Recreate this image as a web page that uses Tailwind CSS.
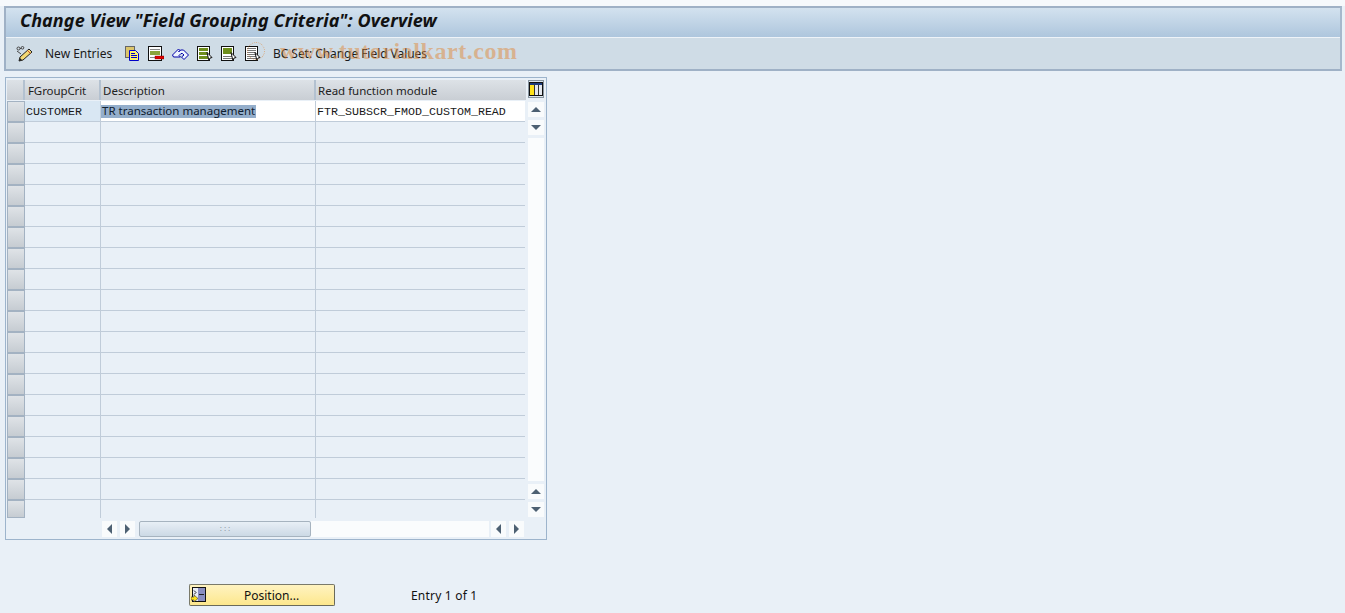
<!DOCTYPE html>
<html lang="en">
<head>
    <meta charset="UTF-8">
    <title>Change View "Field Grouping Criteria": Overview</title>
    <script src="https://cdn.jsdelivr.net/npm/@tailwindcss/browser@4"></script>
</head>
<body class="bg-[#e9f0f7] h-[613px] w-[1345px] overflow-hidden font-['Noto_Sans','Liberation_Sans',sans-serif] text-[12px] text-[#1a1a1a]">
    <div class="h-[6px] bg-[#f6f9fc]"></div>

    <!-- title + toolbar -->
    <div class="ml-[4px] w-[1338px] h-[65px] border-2 border-[#9fb1c6] border-r-[#a6b8cc] flex flex-col">
        <div class="h-[29px] bg-gradient-to-b from-[#d3e2ef] to-[#aec6dd] pl-[14px] flex items-center pb-[5px]">
            <h1 class="font-['Noto_Sans',sans-serif] font-bold italic text-[18px] tracking-[0.1px] text-[#111] whitespace-nowrap">Change View "Field Grouping Criteria": Overview</h1>
        </div>
        <div class="h-px bg-[#eef3f8]"></div>
        <div class="relative flex-1 bg-[#cfdce6] flex items-center pl-[10px]">
            <svg class="w-[17px] h-[16px]" viewBox="0 0 17 16">
                <circle cx="2.500" cy="2.500" r="1.500" fill="none" stroke="#444"/>
                <circle cx="6.500" cy="1.800" r="1.300" fill="none" stroke="#444"/>
                <path d="M1 5l4 3M4 2.500h1" stroke="#444" fill="none"/>
                <path d="M3 15l1-4 9-8 3 3-9 8z" fill="#f3d873" stroke="#222"/>
                <path d="M3 15l1-3 2 2z" fill="#222"/>
                <path d="M11.500 4.500l3 3" stroke="#c84a2a"/>
            </svg>
            <span class="ml-[12px] w-[67px] whitespace-nowrap">New Entries</span>
            <svg class="ml-[12px] w-[16px] h-[16px]" viewBox="0 0 16 16">
                <rect x="1.500" y="0.500" width="9" height="11" fill="#dcc56a" stroke="#666"/>
                <path d="M5.500 4.500h6l3 3v7h-9z" fill="#fff46a" stroke="#0000c8"/>
                <path d="M7 7.500h4M7 9.500h6M7 11.500h6" stroke="#0000c8"/>
            </svg>
            <svg class="ml-[8px] w-[16px] h-[16px]" viewBox="0 0 16 16">
                <rect x="0.500" y="0.500" width="13" height="14" fill="#fff" stroke="#111"/>
                <path d="M2 3.500h10" stroke="#888"/>
                <rect x="2" y="5" width="10" height="4" fill="#8aa53a"/>
                <path d="M2 11.500h5" stroke="#888"/>
                <rect x="7" y="10" width="9" height="3" fill="#e00000" stroke="#600" stroke-width="0.400"/>
            </svg>
            <svg class="ml-[8px] w-[17px] h-[16px]" viewBox="0 0 17 16">
                <path d="M0.500 9l6-6 1.500 1.500-1.500 1.500 2-2 3 0 5 5-4.500 4.500-2.500-2.500 2.500-2-1.500-1.500h-1.500l-2 2 1.500 1.500h-7z" fill="#eef4ff" stroke="#0000a8"/>
            </svg>
            <svg class="ml-[8px] w-[16px] h-[16px]" viewBox="0 0 16 16">
                <rect x="0.500" y="0.500" width="12" height="14" fill="#fff" stroke="#111"/>
                <rect x="2" y="2" width="9" height="3" fill="#6f8f1c"/>
                <rect x="2" y="6" width="9" height="3" fill="#6f8f1c"/>
                <rect x="2" y="10" width="9" height="3" fill="#6f8f1c"/>
                <path d="M10 6.500l5 5-2 .5-1 3z" fill="#fff" stroke="#111"/>
            </svg>
            <svg class="ml-[8px] w-[16px] h-[16px]" viewBox="0 0 16 16">
                <rect x="0.500" y="0.500" width="12" height="14" fill="#fff" stroke="#111"/>
                <rect x="2" y="2" width="9" height="6" fill="#6f8f1c"/>
                <path d="M2 10.500h9M2 12.500h9" stroke="#777"/>
                <path d="M10 6.500l5 5-2 .5-1 3z" fill="#fff" stroke="#111"/>
            </svg>
            <svg class="ml-[8px] w-[16px] h-[16px]" viewBox="0 0 16 16">
                <rect x="0.500" y="0.500" width="12" height="14" fill="#fff" stroke="#111"/>
                <path d="M2 2.500h9M2 4.500h9M2 6.500h9M2 8.500h9M2 10.500h9M2 12.500h9" stroke="#777"/>
                <path d="M10 6.500l5 5-2 .5-1 3z" fill="#fff" stroke="#111"/>
            </svg>
            <span class="ml-[12px] whitespace-nowrap tracking-[-0.05px]">BC Set: Change Field Values</span>
            <!-- watermark -->
            <div class="absolute left-[241px] top-0 flex items-center text-[#e0883a]/50 pointer-events-none">
                <span class="w-[18px] h-[18px] rounded-full border border-dotted border-[#e0883a]/60"></span>
                <span class="ml-[15px] font-['Liberation_Serif',serif] font-bold text-[24px] leading-[26px] tracking-[0.55px] whitespace-nowrap">www.tutorialkart.com</span>
            </div>
        </div>
    </div>

    <!-- table control -->
    <div class="mt-[6px] ml-[5px] w-[542px] h-[463px] border border-[#9db4cc] pl-px pt-[2px] flex">
        <div class="w-[519px] flex-none">
            <div class="flex h-[21px] bg-gradient-to-b from-[#dde2e7] to-[#c9ced4] border-b border-[#e9f0f7] text-[11.5px] text-[#222]">
                <div class="w-[18px] border-r-2 border-[#b3c1d0]"></div>
                <div class="w-[76px] border-r-2 border-[#b3c1d0] pl-[3px] leading-[21px] tracking-[-0.1px]">FGroupCrit</div>
                <div class="w-[215px] border-r-2 border-[#b3c1d0] pl-[2px] leading-[21px]">Description</div>
                <div class="flex-1 pl-[2px] leading-[21px]">Read function module</div>
            </div>
            <div id="rows" class="font-['Liberation_Mono',monospace] text-[11.67px]">
                <div class="flex h-[21px]">
                    <div class="w-[18px] h-[21px] bg-gradient-to-b from-[#dfe3e7] to-[#c6ccd2] border border-[#a3b2c2]"></div>
                    <div class="w-[76px] bg-[#d9e7f3] border-b border-r border-[#c0ccd9] leading-[22px] pl-px">CUSTOMER</div>
                    <div class="w-[215px] bg-white border-b border-r border-[#c0ccd9] font-['Noto_Sans','Liberation_Sans',sans-serif] text-[11.5px] pt-[4px]"><span class="block w-fit h-[13px] leading-[12px] pl-px pr-px bg-[#94aecb] text-[#10202f]">TR transaction management</span></div>
                    <div class="flex-1 mr-px bg-white border-b border-[#c0ccd9] leading-[22px] pl-px">FTR_SUBSCR_FMOD_CUSTOM_READ</div>
                </div>
            </div>
        </div>
        <!-- vertical scrollbar -->
        <div class="w-[20px] flex-none flex flex-col pl-[2px]">
            <button class="w-[16px] h-[18px] flex items-center justify-center border border-[#87949f] bg-[#dbe5ee]">
                <svg class="w-[14px] h-[14px]" viewBox="0 0 14 14">
                    <rect x="0.500" y="0.500" width="13" height="13" fill="#fff" stroke="#111"/>
                    <rect x="1" y="1" width="12" height="2" fill="#1c3a7a"/>
                    <rect x="1" y="3" width="4" height="10" fill="#ffe21a"/>
                    <rect x="6" y="3" width="3" height="10" fill="#e4e8ee"/>
                    <rect x="10" y="3" width="3" height="10" fill="#e4e8ee"/>
                    <path d="M5.500 3v10M9.500 3v10" stroke="#333"/>
                </svg>
            </button>
            <div class="mt-[4px] w-[16px] flex-1 flex flex-col gap-[3px]">
                <div class="h-[15px] bg-[#f9fbfc] flex items-center justify-center"><span class="border-x-[5px] border-x-transparent border-b-[5px] border-b-[#4d6072]"></span></div>
                <div class="h-[15px] bg-[#f9fbfc] flex items-center justify-center"><span class="border-x-[5px] border-x-transparent border-t-[5px] border-t-[#4d6072]"></span></div>
                <div class="flex-1 bg-[#fafcfd]"></div>
                <div class="h-[15px] bg-[#f9fbfc] flex items-center justify-center"><span class="border-x-[5px] border-x-transparent border-b-[5px] border-b-[#4d6072]"></span></div>
                <div class="h-[15px] bg-[#f9fbfc] flex items-center justify-center"><span class="border-x-[5px] border-x-transparent border-t-[5px] border-t-[#4d6072]"></span></div>
                <div class="h-[19px]"></div>
            </div>
        </div>
    </div>

    <!-- footer row -->
    <div class="mt-[44px] ml-[189px] flex items-center">
        <button class="w-[146px] h-[22px] rounded-[2px] border border-[#7a7a6a] border-r-[#6a6a5a] border-b-[#6a6a5a] bg-gradient-to-b from-[#fff3c0] to-[#fde78c] flex items-center">
            <svg class="w-[15px] h-[16px] ml-px" viewBox="0 0 15 16">
                <rect x="1.500" y="0.500" width="13" height="14" fill="#e8ecf6" stroke="#111"/>
                <rect x="7" y="1" width="7" height="13" fill="#8a8ec0"/>
                <path d="M8 7.500h5M3 3.500l2 2-2 2" stroke="#222" fill="none"/>
                <path d="M0 10h3V8l4 3.500-4 3.500v-2H0z" fill="#ffe21a" stroke="#333" stroke-width="0.600"/>
            </svg>
            <span class="ml-[38px] pt-px text-[#111]">Position...</span>
        </button>
        <span class="ml-[76px] pt-[2px] text-[#111] tracking-[0.2px]">Entry 1 of 1</span>
    </div>

    <script>
        // empty rows of the table control
        const rows = document.getElementById('rows');
        for (let i = 0; i < 19; i++) {
            if (i < 18) {
                rows.insertAdjacentHTML('beforeend', `
                <div class="flex h-[21px]">
                    <div class="w-[18px] h-[21px] bg-gradient-to-b from-[#dfe3e7] to-[#c6ccd2] border border-[#a3b2c2]"></div>
                    <div class="w-[76px] border-b border-r border-[#c0ccd9]"></div>
                    <div class="w-[215px] border-b border-r border-[#c0ccd9]"></div>
                    <div class="flex-1 mr-px border-b border-[#c0ccd9]"></div>
                </div>`);
            } else {
                // last row stops short of the scrollbar and has no bottom line
                rows.insertAdjacentHTML('beforeend', `
                <div class="flex h-[21px]">
                    <div class="w-[18px] h-[18px] bg-gradient-to-b from-[#dfe3e7] to-[#c6ccd2] border border-[#a3b2c2]"></div>
                    <div class="w-[76px] h-[18px] border-r border-[#c0ccd9]"></div>
                    <div class="w-[215px] h-[18px] border-r border-[#c0ccd9]"></div>
                </div>`);
            }
        }
        // horizontal scrollbar
        rows.insertAdjacentHTML('beforeend', `
            <div class="flex h-[16px] ml-[95px] gap-[3px]">
                <div class="w-[15px] bg-[#f9fbfc] flex items-center justify-center"><span class="border-y-[5px] border-y-transparent border-r-[5px] border-r-[#4d6072]"></span></div>
                <div class="w-[15px] bg-[#f9fbfc] flex items-center justify-center"><span class="border-y-[5px] border-y-transparent border-l-[5px] border-l-[#4d6072]"></span></div>
                <div class="w-[172px] flex-none ml-px bg-gradient-to-b from-[#e8eff6] to-[#ccd9e5] border border-[#a6b3bf] rounded-[2px] flex items-center justify-center text-[7px] leading-none text-[#8a98a5]">:::</div>
                <div class="w-[178px] flex-none -ml-[3px] bg-[#fafcfd]"></div>
                <div class="w-[15px] -ml-px bg-[#f9fbfc] flex items-center justify-center"><span class="border-y-[5px] border-y-transparent border-r-[5px] border-r-[#4d6072]"></span></div>
                <div class="w-[15px] bg-[#f9fbfc] flex items-center justify-center"><span class="border-y-[5px] border-y-transparent border-l-[5px] border-l-[#4d6072]"></span></div>
            </div>`);
    </script>
</body>
</html>
